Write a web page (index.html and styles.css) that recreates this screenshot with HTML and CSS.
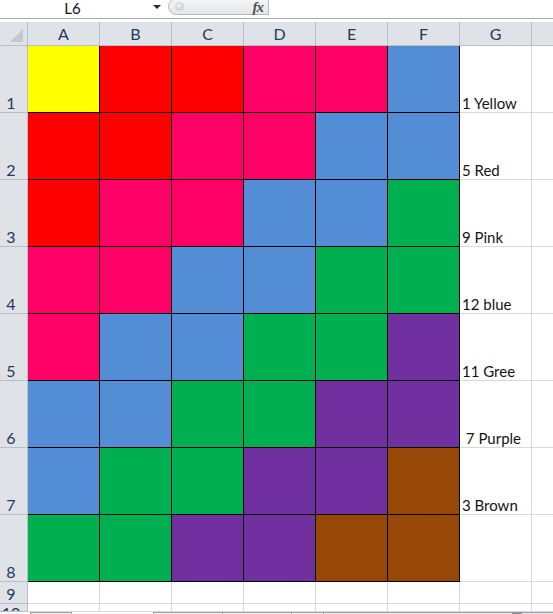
FILE: index.html
```html
<!DOCTYPE html>
<html lang="en">
<head>
<meta charset="utf-8">
<title>Color grid</title>
<link rel="stylesheet" href="styles.css">
</head>
<body>
<div class="fbar">
  <div class="namebox">L6</div>
  <div class="caret"><span class="tri"></span></div>
  <div class="fxbox"><span class="knob"></span><span class="fx">fx</span></div>
  <div class="input"></div>
</div>
<div class="sheet">
  <div class="grid">
    <div class="hd corner"><span class="selall"></span></div>
    <div class="hd colh">A</div><div class="hd colh">B</div><div class="hd colh">C</div><div class="hd colh">D</div><div class="hd colh">E</div><div class="hd colh">F</div><div class="hd colh">G</div><div class="hd colh"></div>

    <div class="hd rowh">1</div>
    <div class="cell y"></div><div class="cell r"></div><div class="cell r"></div><div class="cell p"></div><div class="cell p"></div><div class="cell b"></div>
    <div class="cell lab">1 Yellow</div><div class="cell"></div>

    <div class="hd rowh">2</div>
    <div class="cell r"></div><div class="cell r"></div><div class="cell p"></div><div class="cell p"></div><div class="cell b"></div><div class="cell b"></div>
    <div class="cell lab">5 Red</div><div class="cell"></div>

    <div class="hd rowh">3</div>
    <div class="cell r"></div><div class="cell p"></div><div class="cell p"></div><div class="cell b"></div><div class="cell b"></div><div class="cell g"></div>
    <div class="cell lab">9 Pink</div><div class="cell"></div>

    <div class="hd rowh">4</div>
    <div class="cell p"></div><div class="cell p"></div><div class="cell b"></div><div class="cell b"></div><div class="cell g"></div><div class="cell g"></div>
    <div class="cell lab">12 blue</div><div class="cell"></div>

    <div class="hd rowh">5</div>
    <div class="cell p"></div><div class="cell b"></div><div class="cell b"></div><div class="cell g"></div><div class="cell g"></div><div class="cell u"></div>
    <div class="cell lab">11 Gree</div><div class="cell"></div>

    <div class="hd rowh">6</div>
    <div class="cell b"></div><div class="cell b"></div><div class="cell g"></div><div class="cell g"></div><div class="cell u"></div><div class="cell u"></div>
    <div class="cell lab"> 7 Purple</div><div class="cell"></div>

    <div class="hd rowh">7</div>
    <div class="cell b"></div><div class="cell g"></div><div class="cell g"></div><div class="cell u"></div><div class="cell u"></div><div class="cell n"></div>
    <div class="cell lab">3 Brown</div><div class="cell"></div>

    <div class="hd rowh">8</div>
    <div class="cell g"></div><div class="cell g"></div><div class="cell u"></div><div class="cell u"></div><div class="cell n"></div><div class="cell n"></div>
    <div class="cell"></div><div class="cell"></div>

    <div class="hd rowh">9</div>
    <div class="cell"></div><div class="cell"></div><div class="cell"></div><div class="cell"></div><div class="cell"></div><div class="cell"></div><div class="cell"></div><div class="cell"></div>

    <div class="hd rowh top">10</div>
    <div class="cell"></div><div class="cell"></div><div class="cell"></div><div class="cell"></div><div class="cell"></div><div class="cell"></div><div class="cell"></div><div class="cell"></div>
  </div>
  <div class="bottom">
    <div class="sp1"></div>
    <div class="nav"></div>
    <div class="sp2"></div>
    <div class="tab w69"></div>
    <div class="tab w69"></div>
    <div class="tab w32"></div>
    <div class="track"></div>
    <div class="thumb"></div>
    <div class="rest"></div>
  </div>
</div>
</body>
</html>
```

FILE: styles.css
```css
html, body {
  margin: 0;
  padding: 0;
  background: #ffffff;
  overflow: hidden;
}

body {
  width: 553px;
  height: 614px;
  font-family: Lato, "Liberation Sans", sans-serif;
  font-size: 15px;
  color: #141414;
}

/* formula bar */
.fbar {
  display: flex;
  height: 18px;
  background: #ffffff;
}

.namebox {
  width: 145px;
  text-align: center;
  font-size: 15px;
  line-height: 17px;
  color: #111;
}

.caret {
  width: 23px;
  display: flex;
  justify-content: center;
  padding-top: 5px;
  box-sizing: border-box;
}

.tri {
  width: 0;
  height: 0;
  border-left: 4px solid transparent;
  border-right: 4px solid transparent;
  border-top: 4px solid #2a2a2a;
}

.fxbox {
  width: 101px;
  height: 17px;
  margin-top: -2px;
  box-sizing: border-box;
  border: 1px solid #b4b8bd;
  border-radius: 9px 0 0 9px;
  background: linear-gradient(#f4f5f7, #e3e6ea);
  display: flex;
  align-items: center;
  padding-left: 6px;
}

.knob {
  width: 9px;
  height: 9px;
  border-radius: 50%;
  background: radial-gradient(circle at 40% 35%, #f2f3f5, #c0c4c9);
  border: 1px solid #d0d3d7;
  box-sizing: border-box;
  margin-top: -1px;
}

.fx {
  margin-left: auto;
  margin-right: 5px;
  font-family: "Liberation Serif", serif;
  font-style: italic;
  font-weight: bold;
  font-size: 15px;
  line-height: 15px;
  color: #505050;
  letter-spacing: -1px;
  padding-top: 1px;
}

.input {
  flex: 1;
}

/* sheet */
.sheet {
  border-top: 1px solid #abafb4;
  padding-top: 3px;
  width: 553px;
  overflow: hidden;
}

.grid {
  display: grid;
  grid-template-columns: 28px repeat(8, 72px);
  grid-template-rows: 24px repeat(8, 67px) 22px 8px;
  width: 604px;
}

.grid > div {
  box-sizing: border-box;
  border-right: 1px solid #d8d8d8;
  border-bottom: 1px solid #d8d8d8;
  overflow: hidden;
}

.grid > .hd {
  background: #dfe3e8;
  border-color: #b9bec4;
  color: #25395a;
}

.corner {
  display: flex;
  justify-content: flex-end;
  align-items: flex-end;
  padding: 0 4px 3px 0;
}

.selall {
  width: 13px;
  height: 13px;
  background: #c3c8ce;
  clip-path: polygon(100% 0, 100% 100%, 0 100%);
}

.colh {
  text-align: center;
  line-height: 23px;
  font-size: 16px;
}

.rowh {
  display: flex;
  justify-content: center;
  align-items: flex-end;
  padding-right: 5px;
  line-height: 18px;
  font-size: 16px;
}

.rowh.top {
  align-items: flex-start;
}

.lab {
  display: flex;
  align-items: flex-end;
  padding-left: 2px;
  line-height: 18px;
  white-space: pre;
}

.grid > .y, .grid > .r, .grid > .p, .grid > .b,
.grid > .g, .grid > .u, .grid > .n {
  border-color: #000000;
}

.y { background: #ffff00; }
.r { background: #ff0000; }
.p { background: #ff0066; }
.b { background: #538dd5; }
.g { background: #00b050; }
.u { background: #7030a0; }
.n { background: #974706; }

/* bottom strip */
.bottom {
  display: flex;
  height: 4px;
}

.bottom > div {
  box-sizing: border-box;
  height: 4px;
}

.sp1 { width: 30px; }
.nav {
  width: 42px;
  border: 1px solid #9ea3a9;
  border-bottom: none;
  background: #eef0f3;
}
.sp2 { width: 81px; }
.tab {
  border-top: 1px solid #9ea3a9;
  border-left: 1px solid #9ea3a9;
  background: #f2f3f5;
}
.w69 { width: 69px; }
.w32 { width: 32px; }
.track {
  width: 189px;
  border-top: 1px solid #9ea3a9;
  border-left: 1px solid #9ea3a9;
  background: #e8eaed;
}
.thumb {
  width: 10px;
  background: #8f9398;
}
.rest {
  flex: 1;
  border-top: 1px solid #9ea3a9;
  background: #dfe2e6;
}
```
